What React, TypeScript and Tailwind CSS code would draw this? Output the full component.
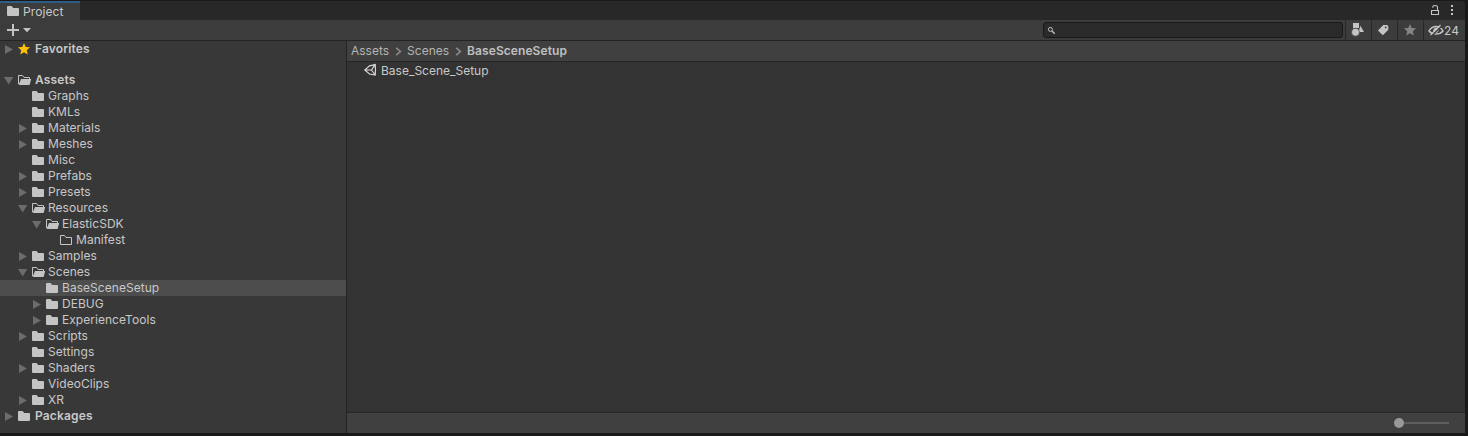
import React from "react";

type FolderKind = "closed" | "open" | "empty" | "star";
type Node = { name: string; depth: number; icon?: FolderKind; arrow?: "right" | "down"; selected?: boolean };

const nodes: Node[] = [
  { name: "Assets", depth: 0, icon: "open", arrow: "down" },
  { name: "Graphs", depth: 1 },
  { name: "KMLs", depth: 1 },
  { name: "Materials", depth: 1, arrow: "right" },
  { name: "Meshes", depth: 1, arrow: "right" },
  { name: "Misc", depth: 1 },
  { name: "Prefabs", depth: 1, arrow: "right" },
  { name: "Presets", depth: 1, arrow: "right" },
  { name: "Resources", depth: 1, icon: "open", arrow: "down" },
  { name: "ElasticSDK", depth: 2, icon: "open", arrow: "down" },
  { name: "Manifest", depth: 3, icon: "empty" },
  { name: "Samples", depth: 1, arrow: "right" },
  { name: "Scenes", depth: 1, icon: "open", arrow: "down" },
  { name: "BaseSceneSetup", depth: 2, selected: true },
  { name: "DEBUG", depth: 2, arrow: "right" },
  { name: "ExperienceTools", depth: 2, arrow: "right" },
  { name: "Scripts", depth: 1, arrow: "right" },
  { name: "Settings", depth: 1 },
  { name: "Shaders", depth: 1, arrow: "right" },
  { name: "VideoClips", depth: 1 },
  { name: "XR", depth: 1, arrow: "right" },
  { name: "Packages", depth: 0, arrow: "right" },
];

const indents = ["pl-[4px]", "pl-[18px]", "pl-[32px]", "pl-[46px]"];

function Icon({ kind }: { kind: FolderKind }) {
  return (
    <svg className="block h-4 w-[14px] shrink-0" viewBox="0 0 14 16">
      {kind === "closed" && <path fill="#c4c4c4" d="M0 4Q0 3 1 3H4.6L6.2 5H11Q12 5 12 6V12Q12 13 11 13H1Q0 13 0 12Z" />}
      {kind === "open" && (
        <>
          <path fill="none" stroke="#c4c4c4" d="M.5 12V3.5H4.5L6 5.5H11.5V7.5" />
          <path fill="#c4c4c4" d="M3 7H13.2L11.6 13H.6Z" />
        </>
      )}
      {kind === "empty" && <path fill="none" stroke="#c4c4c4" d="M.5 3.5H4.5L6 5.5H11.5V12.5H.5Z" />}
      {kind === "star" && <path fill="#ffc107" d="M6 2L7.7 5.9L12 6.3L8.8 9.2L9.8 13.4L6 11.2L2.2 13.4L3.2 9.2L0 6.3L4.3 5.9Z" />}
    </svg>
  );
}

function Row({ node }: { node: Node }) {
  const bold = node.depth === 0;
  return (
    <div className={`flex h-4 items-center ${indents[node.depth]} ${node.selected ? "bg-[#4d4d4d]" : ""}`}>
      <svg className="block h-4 w-[14px] shrink-0" viewBox="0 0 14 16">
        {node.arrow === "right" && <path fill="#6c6c6c" d="M1 4L9 8.5L1 13Z" />}
        {node.arrow === "down" && <path fill="#6c6c6c" d="M0 5H9.4L4.7 12.4Z" />}
      </svg>
      <Icon kind={node.icon ?? "closed"} />
      <span className={`whitespace-nowrap leading-4 ${bold ? "ml-[3px] font-semibold tracking-[0.15px]" : "ml-[2px] tracking-[0.04px]"}`}>{node.name}</span>
    </div>
  );
}

function Chevron() {
  return (
    <svg className="ml-[6px] mr-[5px] h-[9px] w-[7px]" viewBox="0 0 7 9">
      <path d="M1.2 .8L5.4 4.5L1.2 8.2" fill="none" stroke="#8c8c8c" strokeWidth="1.6" />
    </svg>
  );
}

export default function App() {
  return (
    <div className="flex h-[436px] w-[1468px] flex-col overflow-hidden bg-[#191919] pr-[3px] pt-px font-['Inter',sans-serif] text-[12px] text-[#c8c8c8]">
      <header className="flex h-[19px] shrink-0 justify-between rounded-tr-[3px] bg-[#282828]">
        <div className="flex w-20 items-start border-t-2 border-[#2c5d87] bg-[#3c3c3c] pl-[7px]">
          <Icon kind="closed" />
          <span className="ml-[2px] mt-px leading-4 tracking-[0.1px]">Project</span>
        </div>
        <div className="flex">
          <svg className="h-[19px] w-[44px]" viewBox="1421 1 44 19">
            <path d="M1431.5 10.5H1438.5V14.5H1431.5ZM1432.8 7.8V7.2Q1432.8 5.5 1435 5.5Q1437.5 5.5 1437.5 7.2V10.5" fill="none" stroke="#c4c4c4" strokeWidth="1.1" />
            <path fill="#c4c4c4" d="M1451 5h2v2h-2zM1451 9h2v2h-2zM1451 13h2v2h-2z" />
          </svg>
        </div>
      </header>
      <div className="flex h-[21px] shrink-0 justify-between border-b border-[#232323] bg-[#3c3c3c]">
        <svg className="h-5 w-10" viewBox="0 20 40 20">
          <path d="M7 30H19M13 24V36" stroke="#c4c4c4" strokeWidth="2" />
          <path fill="#c4c4c4" d="M23 28H31L27 32.3Z" />
        </svg>
        <div className="flex items-center">
          <div className="mr-[2px] flex h-4 w-[300px] items-center rounded-[3px] border border-[#191919] bg-[#2a2a2a] pl-[3px]">
            <svg className="h-[9px] w-[9px]" viewBox="0 0 9 9" fill="none" stroke="#c4c4c4">
              <circle cx="3.4" cy="3.4" r="2" />
              <path d="M5 5L7.7 7.7" strokeWidth="1.4" />
            </svg>
          </div>
          <div className="h-5 w-[26px] border-l border-[#282828]">
            <svg className="h-5 w-[25px]" viewBox="1346 20 25 20" fill="#c4c4c4">
              <path d="M1353 23H1359V28H1353ZM1360.4 25.8L1364 32H1358.5Z" />
              <circle cx="1355.5" cy="32.2" r="4" stroke="#3c3c3c" strokeWidth=".7" />
            </svg>
          </div>
          <div className="h-5 w-[26px] border-l border-[#282828]">
            <svg className="h-5 w-[25px]" viewBox="1372 20 25 20">
              <path fill="#c4c4c4" d="M1383.2 25H1387L1388.3 26V29.7L1382.8 35.2L1378 30.5Z" />
              <circle cx="1385.7" cy="27.4" r=".9" fill="#3c3c3c" />
            </svg>
          </div>
          <div className="h-5 w-[26px] border-l border-[#282828]">
            <svg className="h-5 w-[25px]" viewBox="1398 20 25 20">
              <path fill="#858585" d="M1410 24L1411.7 28L1416 28.3L1412.8 31.2L1413.8 35.4L1410 33.2L1406.2 35.4L1407.2 31.2L1404 28.3L1408.3 28Z" />
            </svg>
          </div>
          <div className="flex h-5 w-[42px] items-center border-l border-[#282828] pl-[4px]">
            <svg className="h-5 w-4 shrink-0" viewBox="1428 20 16 20" fill="none" stroke="#c4c4c4">
              <path d="M1429 31Q1431.5 26.5 1436 26.5Q1440.5 26.5 1443 31Q1440.5 34 1436 34Q1431.5 34 1429 31Z" strokeWidth="1.5" />
              <circle cx="1436" cy="30.3" r="2.2" fill="#c4c4c4" />
              <path d="M1432 35.7L1442 25.7" stroke="#3c3c3c" strokeWidth="1.5" />
              <path d="M1430.5 35L1440.5 25" strokeWidth="1.3" />
            </svg>
            <span className="mt-px leading-4">24</span>
          </div>
        </div>
      </div>
      <div className="flex h-[392px] shrink-0">
        <aside className="w-[347px] border-r border-[#232323] bg-[#383838]">
          <Row node={{ name: "Favorites", depth: 0, icon: "star", arrow: "right" }} />
          <div className="pt-[15px]">
            {nodes.map((n) => (
              <Row key={n.name} node={n} />
            ))}
          </div>
        </aside>
        <main className="flex flex-1 flex-col bg-[#333333]">
          <nav className="flex h-[21px] items-center border-b border-[#272727] bg-[#404040] pl-[4px] text-[#b4b4b4]">
            <span>Assets</span>
            <Chevron />
            <span>Scenes</span>
            <Chevron />
            <span className="font-semibold tracking-[0.08px] text-[#c0c0c0]">BaseSceneSetup</span>
          </nav>
          <div className="flex flex-1 items-start pl-[16px] pt-px">
            <svg className="h-4 w-[14px]" viewBox="363 63 14 16" fill="none" stroke="#d8d8d8">
              <path d="M370 65.4L364.8 70L370 74.4M369.5 65.8L375.2 64.6L375.5 69.8L375.2 75L369.5 74M365 70H371.5L374.8 65.2M371.5 70L374.8 74.5" strokeWidth="1.2" />
            </svg>
            <span className="ml-[4px] leading-4">Base_Scene_Setup</span>
          </div>
          <footer className="flex h-[21px] items-center justify-end border-t border-[#272727] bg-[#404040] pr-[16px]">
            <div className="h-[10px] w-[10px] rounded-full bg-[#999999]" />
            <div className="h-[2px] w-[45px] bg-[#5e5e5e]" />
          </footer>
        </main>
      </div>
    </div>
  );
}
